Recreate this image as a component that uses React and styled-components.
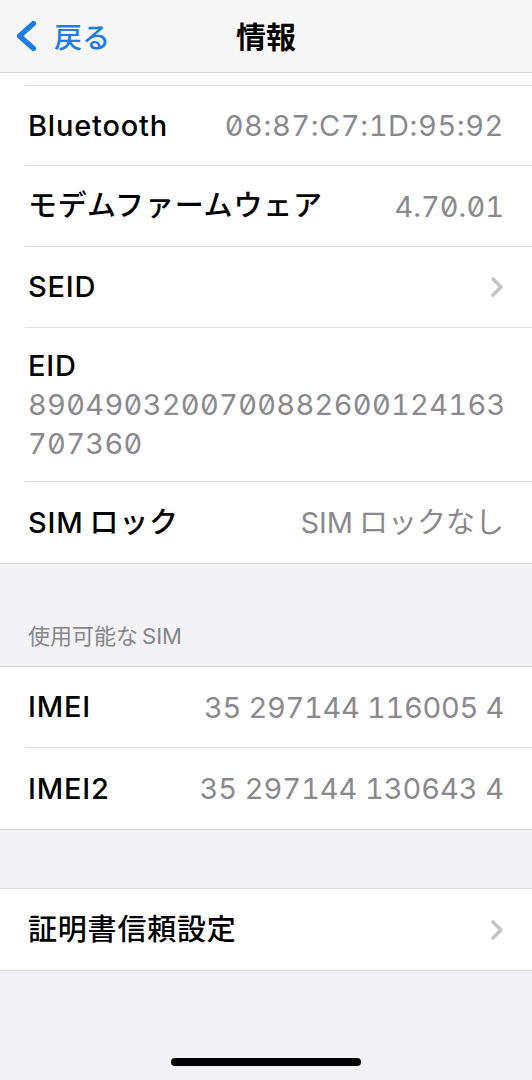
import React from "react";
import styled, { createGlobalStyle } from "styled-components";

const Global = createGlobalStyle`
  html, body { margin: 0; padding: 0; }
  body {
    background: #f2f2f7;
    font-family: "Inter", "Noto Sans CJK JP", sans-serif;
    -webkit-font-smoothing: antialiased;
  }
`;

const Screen = styled.div`
  width: 532px;
  height: 1080px;
  background: #f2f2f7;
  display: flex;
  flex-direction: column;
  position: relative;
  overflow: hidden;
`;

const NavBar = styled.header`
  height: 72px;
  flex: 0 0 auto;
  background: #f7f7f7;
  border-bottom: 1px solid #d6d6d8;
  display: grid;
  grid-template-columns: 1fr auto 1fr;
  align-items: center;
  padding: 0 14px;
`;

const BackButton = styled.button`
  justify-self: start;
  display: flex;
  align-items: center;
  gap: 16px;
  background: none;
  border: 0;
  padding: 0;
  color: #1b7cf0;
  font-family: "Noto Sans CJK JP", sans-serif;
  font-size: 28px;
  font-weight: 500;
  line-height: 1;
`;

const Title = styled.h1`
  margin: 0;
  font-family: "Noto Sans CJK JP", sans-serif;
  font-size: 30px;
  font-weight: 700;
  color: #000;
  padding-bottom: 2px;
`;

const Group = styled.section`
  background: #fff;
  border-top: ${(p) => (p.$top ? "1px solid #d9d9dc" : "none")};
  border-bottom: 1px solid #d9d9dc;
  padding-top: ${(p) => p.$lead || 0}px;
`;

const Row = styled.div`
  display: flex;
  align-items: center;
  justify-content: space-between;
  height: ${(p) => p.$h || 81}px;
  margin-left: 25px;
  padding: 0 28px 0 3px;
  border-top: ${(p) => (p.$sepTop ? "1px solid #dedee1" : "none")};
  border-bottom: ${(p) => (p.$last ? "none" : "1px solid #dedee1")};
  box-sizing: border-box;
`;

const StackRow = styled.div`
  margin-left: 25px;
  padding: 19px 28px 18px 3px;
  border-bottom: 1px solid #dedee1;
  display: flex;
  flex-direction: column;
`;

const Label = styled.span`
  font-size: 29px;
  font-weight: 500;
  color: #000;
  letter-spacing: 0.8px;
  line-height: 38px;
`;

const Value = styled.span`
  font-size: 29px;
  font-weight: 400;
  color: #8a8a8e;
  letter-spacing: ${(p) => p.$ls || 0}px;
  font-feature-settings: ${(p) =>
    p.$mono ? '"tnum" 1, "zero" 1' : p.$tab ? '"tnum" 1' : '"tnum" 0'};
  line-height: 39px;
`;

const Gap = styled.span`
  display: inline-block;
  width: ${(p) => p.$w || 6}px;
`;

const Chevron = styled.svg`
  width: 14px;
  height: 22px;
`;

const SectionHeader = styled.div`
  height: 102px;
  box-sizing: border-box;
  padding: 0 28px 15px 28px;
  display: flex;
  align-items: flex-end;
  font-size: 22px;
  color: #86868b;
  line-height: 30px;
`;

const Spacer = styled.div`
  height: ${(p) => p.$h}px;
  flex: 0 0 auto;
`;

const HomeIndicator = styled.div`
  position: absolute;
  left: 171px;
  bottom: 14px;
  width: 190px;
  height: 8px;
  border-radius: 4px;
  background: #000;
`;

const Disclosure = () => (
  <Chevron viewBox="0 0 14 22">
    <path d="M3 3 L11 11 L3 19" fill="none" stroke="#c4c4c7" strokeWidth="3.6" strokeLinecap="round" strokeLinejoin="round" />
  </Chevron>
);

export default function App() {
  return (
    <Screen>
      <Global />
      <NavBar>
        <BackButton>
          <svg width="24" height="32" viewBox="0 0 24 32">
            <path d="M19.5 3.5 L5.5 16 L19.5 28.5" fill="none" stroke="#1b7cf0" strokeWidth="5.2" strokeLinecap="round" strokeLinejoin="round" />
          </svg>
          <span>戻る</span>
        </BackButton>
        <Title>情報</Title>
        <span />
      </NavBar>

      <Group $lead={12}>
        <Row $sepTop>
          <Label>Bluetooth</Label>
          <Value $mono $ls={0.6}>08:87:C7:1D:95:92</Value>
        </Row>
        <Row>
          <Label>モデムファームウェア</Label>
          <Value $mono>4.70.01</Value>
        </Row>
        <Row>
          <Label>SEID</Label>
          <Disclosure />
        </Row>
        <StackRow>
          <Label>EID</Label>
          <Value $mono $ls={0.3}>
            8904903200700882600124163
            <br />
            707360
          </Value>
        </StackRow>
        <Row $last>
          <Label>
            SIM<Gap />ロック
          </Label>
          <Value>
            SIM<Gap />ロックなし
          </Value>
        </Row>
      </Group>

      <SectionHeader>
        <span>
          使用可能な<Gap $w={4} />SIM
        </span>
      </SectionHeader>

      <Group $top>
        <Row>
          <Label>IMEI</Label>
          <Value $tab $ls={-0.3}>35 297144 116005 4</Value>
        </Row>
        <Row $last>
          <Label>IMEI2</Label>
          <Value $tab $ls={-0.05}>35 297144 130643 4</Value>
        </Row>
      </Group>

      <Spacer $h={58} />

      <Group $top>
        <Row $last>
          <Label>証明書信頼設定</Label>
          <Disclosure />
        </Row>
      </Group>

      <HomeIndicator />
    </Screen>
  );
}
